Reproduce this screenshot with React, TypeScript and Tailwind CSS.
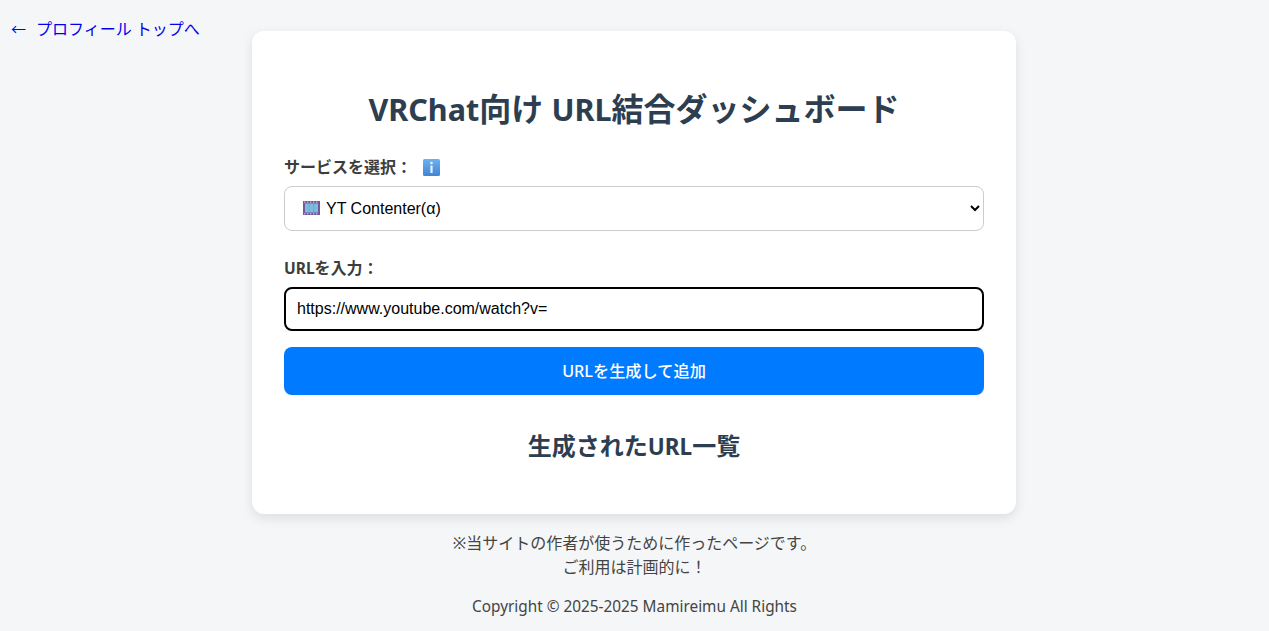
const fontStack = 'font-["Noto_Sans","Noto_Sans_CJK_JP",sans-serif]';

function FilmIcon() {
  return (
    <svg viewBox="0 0 17 14" className="w-[17px] h-[14px]" aria-hidden="true">
      <rect width="17" height="14" fill="#74589c" />
      <rect x="2" y="2.5" width="13" height="9" fill="#7cbcdc" />
      <path d="M6.3 2.5v9M10.7 2.5v9" stroke="#6a9cc0" strokeWidth="0.6" />
      <path
        d="M1 1.2h1.4M4 1.2h1.4M7 1.2h1.4M10 1.2h1.4M13 1.2h1.4M1 12.8h1.4M4 12.8h1.4M7 12.8h1.4M10 12.8h1.4M13 12.8h1.4"
        stroke="#d9cfe6"
        strokeWidth="1"
      />
    </svg>
  );
}

function InfoIcon() {
  return (
    <svg viewBox="0 0 17 17" className="w-[17px] h-[17px]" aria-hidden="true">
      <defs>
        <linearGradient id="infoBg" x1="0" y1="0" x2="0" y2="1">
          <stop offset="0" stopColor="#6fb1ec" />
          <stop offset="1" stopColor="#3f86d8" />
        </linearGradient>
      </defs>
      <rect width="17" height="17" rx="1.5" fill="url(#infoBg)" />
      <circle cx="8.5" cy="4" r="1.3" fill="#e8f2fc" />
      <rect x="7.4" y="6.5" width="2.2" height="7.5" fill="#e8f2fc" />
    </svg>
  );
}

export default function App() {
  return (
    <div className={`relative min-h-[631px] bg-[#f4f6f8] pt-[31px] ${fontStack}`}>
      <a
        href="#"
        className="absolute left-[11px] top-[18px] text-base leading-[22px] text-[#0000ee]"
      >
        <span className="text-[15px] mr-[10px]">←</span>プロフィール トップへ
      </a>

      <main className="w-[764px] ml-[252px] bg-white rounded-xl shadow-[0_4px_12px_rgba(0,0,0,0.1)] px-8 pt-[53px] pb-[49px]">
        <h1 className="h-[50px] text-[32px] leading-[50px] font-bold text-[#2c3e50] text-center mb-[21px]">
          <span className="text-[30.5px]">VRChat</span>向け <span className="text-[30.5px]">URL</span>結合ダッシュボード
        </h1>

        <label className="flex items-center text-base leading-6 font-bold text-[#3d3d3d] mb-[7px]">
          サービスを選択：
          <span className="ml-[11px]">
            <InfoIcon />
          </span>
        </label>
        <div className="relative mb-[25px]">
          <select
            defaultValue="yt"
            className="w-full h-[45px] bg-white rounded-lg border border-[#ccc] pl-[37px] pr-1 text-base text-black font-['Liberation_Sans',sans-serif]"
          >
            <option value="yt">YT Contenter(α)</option>
          </select>
          <span className="absolute left-[19px] top-[15px] flex pointer-events-none">
            <FilmIcon />
          </span>
        </div>

        <label className="block h-6 text-base leading-6 font-bold text-[#3d3d3d] mb-[7px]">
          <span className="text-[15.5px]">URL</span>を入力：
        </label>
        <input
          type="text"
          defaultValue="https://www.youtube.com/watch?v="
          className="block w-full h-[44px] rounded-lg border-2 border-black px-[11px] text-base text-black bg-white font-['Liberation_Sans',sans-serif] outline-none mb-4"
        />

        <button className="block w-full h-12 pt-px rounded-lg bg-[#007bff] text-white text-[16.2px] font-medium">
          URLを生成して追加
        </button>

        <h2 className="h-[38px] text-2xl leading-[38px] font-bold text-[#2c3e50] text-center mt-[32px]">
          生成された<span className="text-[22.5px]">URL</span>一覧
        </h2>
      </main>

      <footer className="text-center text-base text-[#444] pt-[17px]">
        <p className="leading-6">※当サイトの作者が使うために作ったページです。</p>
        <p className="leading-6">ご利用は計画的に！</p>
        <p className="text-[15.35px] leading-6 mt-[15px]">Copyright © 2025-2025 Mamireimu All Rights</p>
      </footer>
    </div>
  );
}
